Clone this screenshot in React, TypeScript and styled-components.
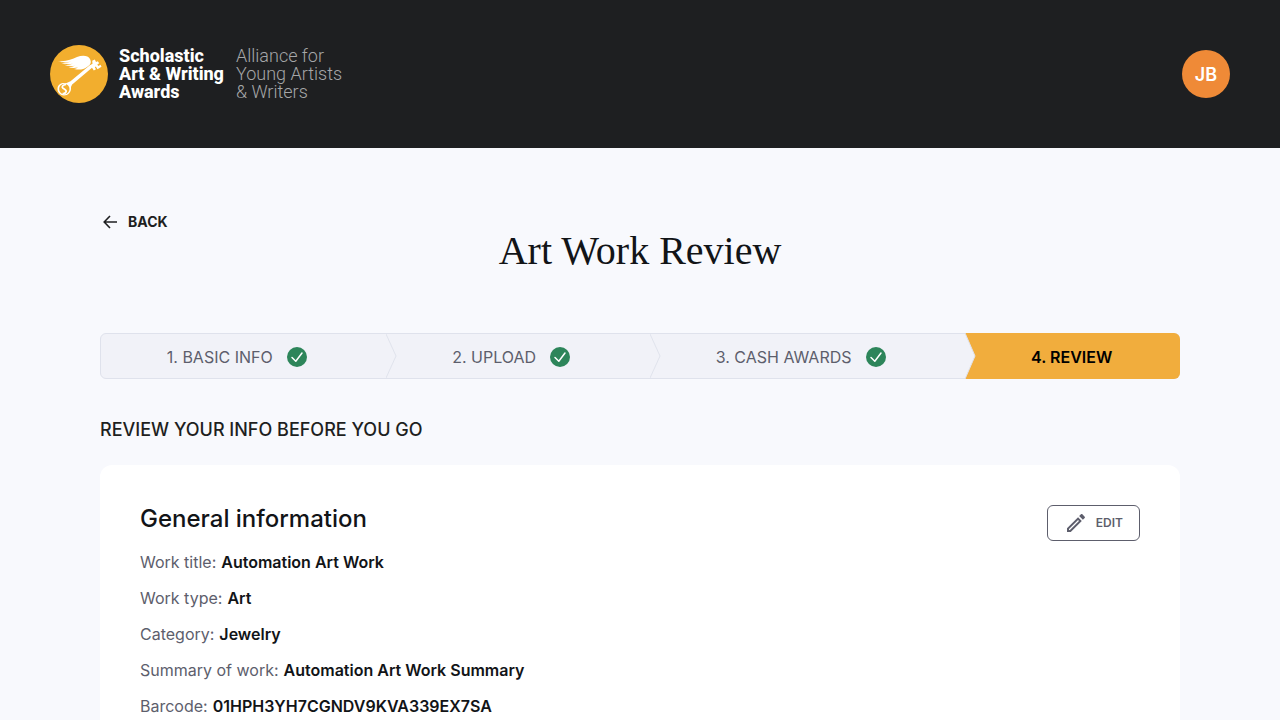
import React from "react";
import styled, { createGlobalStyle } from "styled-components";

const GlobalStyle = createGlobalStyle`
  *, *::before, *::after { box-sizing: border-box; }
  body {
    margin: 0;
    background: #f8f9fd;
    color: #121417;
    font-family: Inter, "Liberation Sans", sans-serif;
    font-size: 16px;
    line-height: 24px;
  }
`;

const Header = styled.header`
  display: flex;
  align-items: center;
  justify-content: space-between;
  padding: 44px 50px;
  background: #1e1f21;
`;

const Brand = styled.a`
  display: flex;
  align-items: center;
  height: 60px;
  color: #fff;
  text-decoration: none;
  font-family: Roboto, "Liberation Sans", sans-serif;
  font-size: 18px;
  line-height: 18px;
  white-space: nowrap;
`;

const BrandName = styled.span`
  margin-left: 11px;
  font-weight: 800;
`;

const BrandTagline = styled.span`
  margin-left: 12px;
  font-weight: 300;
  color: #a5a6a8;
`;

const Avatar = styled.button`
  width: 48px;
  height: 48px;
  padding: 2px 0 0;
  border: 0;
  border-radius: 50%;
  background: #ef8a37;
  color: #fff;
  font: 600 18px/24px Inter, sans-serif;
  cursor: pointer;
`;

const Main = styled.main`
  padding: 64px 100px 60px;
`;

const BackLink = styled.a`
  display: flex;
  width: fit-content;
  align-items: center;
  gap: 8px;
  height: 20px;
  color: #1e1f21;
  font-size: 14px;
  font-weight: 700;
  line-height: 20px;
  text-decoration: none;
`;

const Title = styled.h1`
  margin: 0 0 63px;
  color: #121417;
  font-family: "Liberation Serif", serif;
  font-size: 40px;
  font-weight: 400;
  line-height: 38px;
  text-align: center;
`;

const Steps = styled.ol`
  display: flex;
  height: 46px;
  margin: 0 0 36px;
  padding: 0;
  list-style: none;
  border: 1px solid #dfe2ec;
  border-radius: 6px;
  background: #f1f2f8;
`;

const Step = styled.li<{ $current?: boolean }>`
  position: relative;
  display: flex;
  flex: 1 1 auto;
  align-items: center;
  justify-content: center;
  gap: 14px;
  margin: ${(p) => (p.$current ? "-1px -1px -1px 0" : "0")};
  padding: ${(p) => (p.$current ? "2px 2px 0 0" : "2px 14px 0 0")};
  border-radius: ${(p) => (p.$current ? "0 6px 6px 0" : "0")};
  background: ${(p) => (p.$current ? "#f1ad3d" : "transparent")};
  color: ${(p) => (p.$current ? "#000" : "#5d5e6c")};
  font-weight: ${(p) => (p.$current ? 600 : 400)};
  white-space: nowrap;
`;

const Chevron = styled.svg`
  position: absolute;
  top: 0;
  left: 0;
  height: 100%;
`;

const Lead = styled.h2`
  margin: 0 0 20px;
  color: #1e1f21;
  font-size: 18px;
  font-weight: 500;
  line-height: 30px;
`;

const Card = styled.section`
  padding: 40px;
  border-radius: 12px;
  background: #fff;
`;

const CardHeader = styled.div`
  display: flex;
  align-items: flex-start;
  justify-content: space-between;
  margin-bottom: 9px;
`;

const CardTitle = styled.h3`
  margin: 0;
  font-size: 24px;
  font-weight: 500;
  line-height: 28px;
`;

const EditButton = styled.button`
  display: flex;
  align-items: center;
  gap: 8px;
  height: 36px;
  padding: 0 16px;
  border: 1px solid #5d5e6c;
  border-radius: 6px;
  background: #fff;
  color: #5d5e6c;
  font: 600 12px/16px Inter, sans-serif;
  cursor: pointer;
`;

const Details = styled.dl`
  display: grid;
  gap: 12px;
  margin: 0;
`;

const Detail = styled.div`
  display: flex;
  gap: 5px;
`;

const Term = styled.dt`
  color: #5d5e6c;
`;

const Value = styled.dd`
  margin: 0;
  font-weight: 600;
`;

function Emblem() {
  return (
    <svg width="58" height="58" viewBox="0 0 58 58" aria-hidden="true">
      <circle cx="29" cy="29" r="29" fill="#f2ae2e" />
      <path
        d="M8 16C16 17 22 14 27 12C32 10 38 10 40 14C42 18 40 20 37 22C33 25 29 25 24 24Q26 23.500 28 22.500Q22 23.500 18.500 22Q22 22 25 20.800Q18 21.500 14 19.800Q19 20.300 23 18.800Q15 19.600 10.500 17.800Q16 18.200 21 16.800Q13 18 8 16Z"
        fill="#fff"
      />
      <path d="M19 37.500L39.500 20.500L42.500 18.800L42.200 15.800L44.800 14.500L46 17L47.800 16.200L49.200 18.300L47.300 19.500L48.300 21L50.500 19.800L51.500 21.800L47.500 24.200L45.800 21.500L44.800 22.200L46 24.200L43.800 25.500L42 22.800L21 40.500Z" fill="#fff" />
      <path d="M7.500 44C7.500 39 12 37.500 16 38.200L20 36.500L22 39.500L21 42C21.500 47.500 18 50.500 14 50.500C10.500 50.500 7.500 47.500 7.500 44Z" fill="#fff" />
      <circle cx="14.300" cy="44" r="5.200" fill="#f2ae2e" />
      <path d="M16 39.500C12.500 39.800 11.300 42 13 43.300C14.800 44.500 17 45 16 47C15.500 48 14 48.800 12.500 48.500" fill="none" stroke="#fff" strokeWidth="1.700" />
    </svg>
  );
}

function BackArrow() {
  return (
    <svg width="20" height="20" viewBox="0 0 20 20" fill="none" stroke="currentColor" strokeWidth="1.600" aria-hidden="true">
      <path d="M17 10H4.500M10 4L4.200 10L10 16" />
    </svg>
  );
}

function DoneBadge() {
  return (
    <svg width="20" height="20" viewBox="0 0 20 20" role="img" aria-label="Completed">
      <circle cx="10" cy="10" r="10" fill="#2d855a" />
      <path d="M5 10.500L8.800 14.200L15 6" fill="none" stroke="#fff" strokeWidth="1.500" strokeLinecap="round" strokeLinejoin="round" />
    </svg>
  );
}

function Pencil() {
  return (
    <svg width="24" height="24" viewBox="0 0 24 24" fill="currentColor" aria-hidden="true">
      <path d="M14.060 9.020l.92.92L5.920 19H5v-.92l9.060-9.060M17.660 3c-.25 0-.51.1-.7.290l-1.830 1.830 3.750 3.750 1.830-1.830c.39-.39.39-1.020 0-1.410l-2.340-2.340c-.2-.2-.45-.29-.71-.29zm-3.600 3.190L3 17.250V21h3.750L17.810 9.940l-3.750-3.750z" />
    </svg>
  );
}

const steps = [
  { label: "1. BASIC INFO", done: true },
  { label: "2. UPLOAD", done: true },
  { label: "3. CASH AWARDS", done: true },
  { label: "4. REVIEW", done: false },
];

const details = [
  ["Work title:", "Automation Art Work"],
  ["Work type:", "Art"],
  ["Category:", "Jewelry"],
  ["Summary of work:", "Automation Art Work Summary"],
  ["Barcode:", "01HPH3YH7CGNDV9KVA339EX7SA"],
];

export default function App() {
  return (
    <>
      <GlobalStyle />
      <Header>
        <Brand href="#">
          <Emblem />
          <BrandName>
            Scholastic
            <br />
            Art &amp; Writing
            <br />
            Awards
          </BrandName>
          <BrandTagline>
            Alliance for
            <br />
            Young Artists
            <br />
            &amp; Writers
          </BrandTagline>
        </Brand>
        <Avatar type="button">JB</Avatar>
      </Header>
      <Main>
        <BackLink href="#">
          <BackArrow />
          BACK
        </BackLink>
        <Title>Art Work Review</Title>
        <Steps>
          {steps.map((step, i) => (
            <Step key={step.label} $current={!step.done} aria-current={step.done ? undefined : "step"}>
              {i > 0 && (
                <Chevron width="11" viewBox="0 0 11 46" preserveAspectRatio="none" aria-hidden="true">
                  <path d="M0 0L10 23L0 46" fill="#f1f2f8" stroke="#dfe2ec" />
                </Chevron>
              )}
              {step.label}
              {step.done && <DoneBadge />}
            </Step>
          ))}
        </Steps>
        <Lead>REVIEW YOUR INFO BEFORE YOU GO</Lead>
        <Card>
          <CardHeader>
            <CardTitle>General information</CardTitle>
            <EditButton type="button">
              <Pencil />
              EDIT
            </EditButton>
          </CardHeader>
          <Details>
            {details.map(([term, value]) => (
              <Detail key={term}>
                <Term>{term}</Term>
                <Value>{value}</Value>
              </Detail>
            ))}
          </Details>
        </Card>
      </Main>
    </>
  );
}
